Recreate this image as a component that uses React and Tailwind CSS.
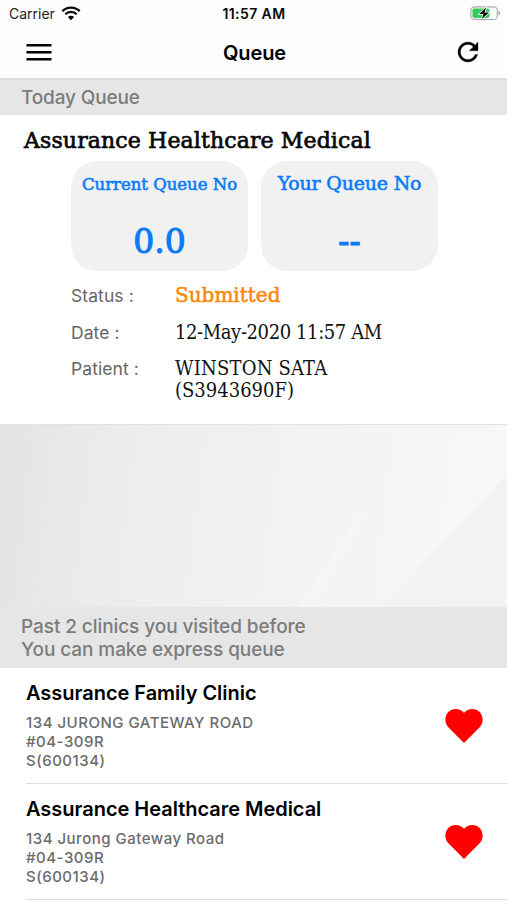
const clinics = [
  {
    name: 'Assurance Family Clinic',
    address: ['134 JURONG GATEWAY ROAD', '#04-309R', 'S(600134)'],
  },
  {
    name: 'Assurance Healthcare Medical',
    address: ['134 Jurong Gateway Road', '#04-309R', 'S(600134)'],
  },
];

const WifiIcon = () => (
  <svg width="20" height="15" viewBox="0 0 20 15" fill="none" stroke="#0a0a0a" strokeWidth="2.3">
    <path d="M1.3 5.1a12.4 12.4 0 0 1 17.4 0" />
    <path d="M4.3 8.3a8.1 8.1 0 0 1 11.4 0" />
    <path d="M10 14.2 6.9 11a4.4 4.4 0 0 1 6.2 0z" fill="#0a0a0a" stroke="none" />
  </svg>
);

const BatteryIcon = () => (
  <svg width="31" height="15" viewBox="0 0 31 15">
    <rect x="0.9" y="0.9" width="26.4" height="12.6" rx="3.6" fill="#fdfdfd" stroke="#a9a9a9" strokeWidth="1.1" />
    <path d="M28.6 5v4.4c1.9-.6 1.9-3.8 0-4.4z" fill="#a0a0a0" />
    <rect x="2.5" y="2.5" width="17" height="9.4" rx="1.8" fill="#35cb5b" />
    <path d="m16 1.6-6.8 6.3h4.4l-1.8 5 7.1-6.4h-4.4z" fill="#000" stroke="#fdfdfd" strokeWidth="1.5" paintOrder="stroke" />
  </svg>
);

const MenuIcon = () => (
  <svg width="26" height="18" viewBox="0 0 26 18" stroke="#000" strokeWidth="2.6">
    <path d="M.5 2.2h25M.5 9.2h25M.5 16.2h25" />
  </svg>
);

const RefreshIcon = () => (
  <svg width="30" height="30" viewBox="0 0 24 24">
    <path
      d="M17.65 6.35C16.2 4.9 14.21 4 12 4c-4.42 0-7.99 3.58-7.99 8s3.57 8 7.99 8c3.73 0 6.84-2.55 7.73-6h-2.08c-.82 2.33-3.04 4-5.65 4-3.31 0-6-2.69-6-6s2.69-6 6-6c1.66 0 3.14.69 4.22 1.78L13 11h7V4z"
      fill="#000"
      stroke="#000"
      strokeWidth="0.2"
    />
  </svg>
);

const HeartIcon = () => (
  <svg width="38" height="34" viewBox="0 0 38 34" fill="#ff0000">
    <path d="M19 34 3.6 18.6C1.4 16.4.4 13.8.4 10.6.4 4.6 4.9 0 10.7 0 14 0 17 1.5 19 4 21 1.5 24 0 27.3 0 33.1 0 37.6 4.6 37.6 10.6c0 3.2-1 5.8-3.2 8z" />
  </svg>
);

const Header = () => (
  <header className="h-[80px] border-b-2 border-[#dcdcdc] bg-[#fdfdfd]">
    <div className="grid h-[27px] grid-cols-3 items-center pl-[9px] pr-[6px] text-[#0a0a0a]">
      <div className="flex items-center gap-[6px] text-[14px] text-[#222]">
        <span>Carrier</span>
        <WifiIcon />
      </div>
      <span className="pr-[2px] text-center text-[14px] font-semibold tracking-[0.4px]">11:57 AM</span>
      <div className="flex justify-end">
        <BatteryIcon />
      </div>
    </div>
    <div className="grid h-[50px] grid-cols-3 items-center pl-[26px] pr-[24px]">
      <button type="button" aria-label="Menu">
        <MenuIcon />
      </button>
      <h1 className="pt-px text-center text-[20px] font-semibold tracking-[-0.15px]">Queue</h1>
      <button type="button" aria-label="Refresh" className="flex justify-end">
        <RefreshIcon />
      </button>
    </div>
  </header>
);

const QueueCard = ({ title, value, titleClass }) => (
  <div className="flex h-[110px] w-[177px] flex-col items-center rounded-[26px] bg-[#f1f1f1] font-['DejaVu_Serif',serif] text-[#0a7bf5]">
    <span className={`h-[24px] leading-[24px] whitespace-nowrap [-webkit-text-stroke:0.6px] ${titleClass}`}>{title}</span>
    <span className="text-[33px] leading-[40px] [-webkit-text-stroke:1.1px]">{value}</span>
  </div>
);

const DetailRow = ({ label, className, children }) => (
  <div className={`flex ${className}`}>
    <span className="w-[104px] pt-px text-[17.5px] leading-[22px] tracking-[0.08px] text-[#666]">{label}</span>
    <div className="font-['DejaVu_Serif_Condensed','DejaVu_Serif',serif] text-[20px] leading-[22px] text-[#111]">{children}</div>
  </div>
);

const ClinicRow = ({ clinic }) => (
  <li className="ml-[26px] flex h-[116px] items-start justify-between border-b border-[#dcdcdc] pr-[24px]">
    <div>
      <h3 className="mt-[13px] text-[20px] leading-[24px] font-semibold tracking-[-0.03px] text-black">{clinic.name}</h3>
      <div className="mt-[8px] text-[15px] leading-[19px] font-medium tracking-[0.5px] text-[#6b6b6b]">
        {clinic.address.map((line) => (
          <p key={line}>{line}</p>
        ))}
      </div>
    </div>
    <button type="button" aria-label="Favourite" className="mt-[41px]">
      <HeartIcon />
    </button>
  </li>
);

const App = () => {
  return (
    <div className="flex h-[900px] w-full flex-col overflow-hidden bg-white font-['Inter',sans-serif]">
      <Header />

      <h2 className="h-[35px] bg-[#e6e6e6] pl-[21px] text-[19px] leading-[36px] font-medium tracking-[-0.15px] text-[#7c7c7c]">Today Queue</h2>

      <section className="h-[310px] border-b border-[#e2e2e2]">
        <h3 className="ml-[24px] pt-[12px] font-['DejaVu_Serif',serif] text-[22px] leading-[28px] tracking-[0.13px] whitespace-nowrap text-[#080808] [-webkit-text-stroke:0.7px]">
          Assurance Healthcare Medical
        </h3>
        <div className="mt-[6px] ml-[71px] flex gap-[13px]">
          <QueueCard title="Current Queue No" value="0.0" titleClass="mt-[12px] mb-[25px] text-[16.5px]" />
          <QueueCard title="Your Queue No" value="--" titleClass="mt-[10px] mb-[27px] text-[19px] tracking-[-0.2px]" />
        </div>
        <div className="mt-[13px] ml-[71px]">
          <DetailRow label="Status :" className="h-[37px]">
            <span className="font-['DejaVu_Serif',serif] text-[#f88a12] [-webkit-text-stroke:0.6px]">Submitted</span>
          </DetailRow>
          <DetailRow label="Date :" className="h-[36px]">
            <span className="tracking-[-0.4px]">12-May-2020 11:57 AM</span>
          </DetailRow>
          <DetailRow label="Patient :" className="h-[44px]">
            <p className="tracking-[0.2px]">WINSTON SATA</p>
            <p>(S3943690F)</p>
          </DetailRow>
        </div>
      </section>

      <div className="h-[182px] bg-[linear-gradient(97deg,#e3e3e3_0%,#ebebeb_20%,#f0f0f0_42%,#f4f4f4_70%,#f8f8f8_100%)]">
        <svg className="block" width="507" height="182" viewBox="0 0 507 182">
          <path d="M298 182 364 84l2 2-54 96z" fill="#fafafa" opacity=".35" />
          <path d="M382 182 507 48V182z" fill="#f0f0f0" opacity=".6" />
        </svg>
      </div>

      <div className="h-[61px] bg-[#e6e6e6] pt-[8px] pl-[21px] text-[19px] leading-[23px] font-medium tracking-[-0.08px] text-[#7c7c7c]">
        <p>Past 2 clinics you visited before</p>
        <p>You can make express queue</p>
      </div>

      <ul>
        {clinics.map((clinic) => (
          <ClinicRow key={clinic.name} clinic={clinic} />
        ))}
      </ul>
    </div>
  );
};

export default App;
